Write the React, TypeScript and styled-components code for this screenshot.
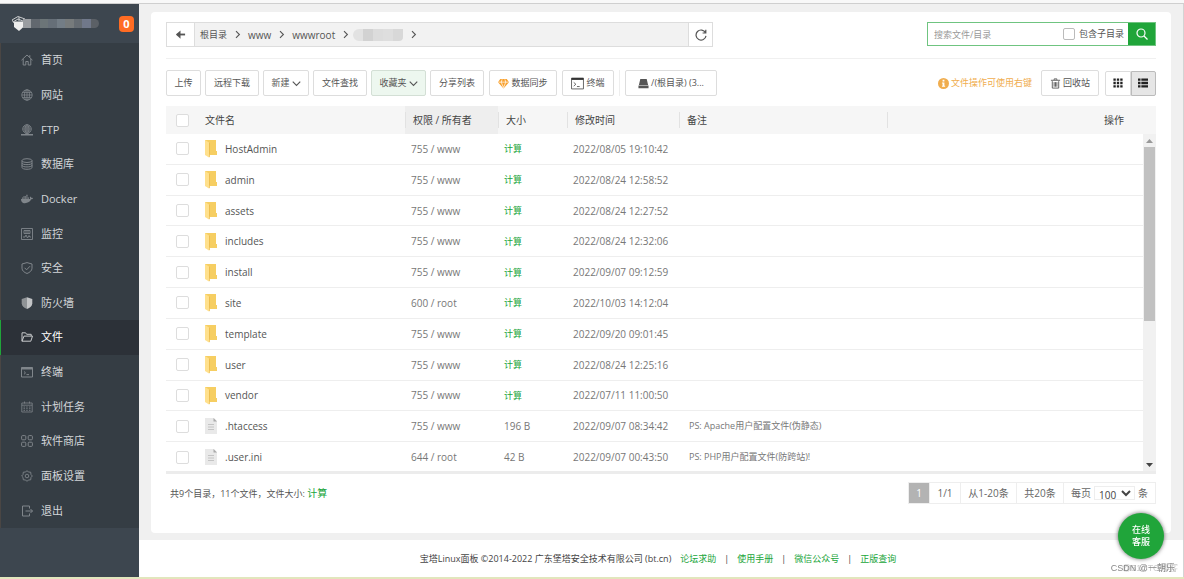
import React from 'react';
import styled, { createGlobalStyle } from 'styled-components';
import { FaDocker } from 'react-icons/fa';

const GREEN = '#20a53a';

const GlobalStyle = createGlobalStyle`
  * { box-sizing: border-box; }
  body {
    margin: 0;
    background: #f0f0f0;
    color: #555;
    font: 10px/16px "Open Sans", "Noto Sans CJK SC", sans-serif;
  }
  button, input, select { font: inherit; color: inherit; margin: 0; }
  button { cursor: pointer; }
  a { color: ${GREEN}; text-decoration: none; }
`;

const Page = styled.div`
  display: flex;
  flex-direction: column;
  min-height: 100vh;
  border-bottom: 2px solid #e2e6bd;
`;
const TopStrip = styled.div`
  height: 4px;
  background: #f8f8f8;
  border-bottom: 1px solid #cfcfcf;
`;
const Shell = styled.div`
  display: flex;
  flex: 1;
  border-right: 1px solid #d4d4d4;
`;

/* Sidebar */
const Sidebar = styled.aside`
  width: 139px;
  flex: none;
  background: #3d464f;
`;
const Brand = styled.header`
  display: flex;
  align-items: center;
  height: 39px;
  padding: 0 5px 0 12px;
`;
const NameMask = styled.div`
  display: flex;
  width: 76px;
  height: 9px;
  margin-left: -3px;
  overflow: hidden;
  border-radius: 0 5px 5px 0;
`;
const MaskCell = styled.span<{ $color: string }>`
  flex: 1;
  background: ${(p) => p.$color};
`;
const Count = styled.span`
  display: flex;
  align-items: center;
  justify-content: center;
  width: 15px;
  height: 16px;
  margin-left: auto;
  border-radius: 4px;
  background: #ff6c23;
  color: #fff;
  font-size: 11px;
  font-weight: 700;
`;
const Menu = styled.nav`
  display: grid;
  grid-template-rows: repeat(14, 1fr);
  height: 485px;
  background: #353d44;
`;
const MenuItem = styled.a<{ $active?: boolean }>`
  display: flex;
  align-items: center;
  gap: 8px;
  padding-left: 20px;
  border-left: 1px solid ${(p) => (p.$active ? GREEN : '#4a4644')};
  background: ${(p) => (p.$active ? '#2c3138' : 'transparent')};
  color: ${(p) => (p.$active ? '#fff' : '#d3d6d9')};
  font-size: 11px;
  svg { color: ${(p) => (p.$active ? '#c8cacc' : '#80868b')}; flex: none; }
`;

/* Main column */
const Main = styled.div`
  display: flex;
  flex: 1;
  flex-direction: column;
  min-width: 0;
`;
const Card = styled.main`
  margin: 8px 12px 7px;
  padding: 10px 15px 29px;
  border-radius: 4px;
  background: #fff;
`;
const TopRow = styled.div`
  display: flex;
  justify-content: space-between;
  padding-bottom: 11px;
  border-bottom: 1px solid #f0f0f0;
`;
const PathBar = styled.div`
  display: flex;
  width: 547px;
  height: 25px;
  border: 1px solid #ddd;
`;
const PathButton = styled.button<{ $side: 'left' | 'right' }>`
  display: flex;
  align-items: center;
  justify-content: center;
  width: ${(p) => (p.$side === 'left' ? 28 : 24)}px;
  padding: 0;
  border: 0;
  border-${(p) => (p.$side === 'left' ? 'right' : 'left')}: 1px solid #ddd;
  background: #fff;
`;
const Crumbs = styled.div`
  display: flex;
  flex: 1;
  align-items: center;
  gap: 6px;
  padding-left: 5px;
  background: #f2f2f2;
  a { color: #555; }
  a:first-child { font-size: 9px; }
`;
const CrumbMask = styled.span`
  display: flex;
  width: 50px;
  height: 12px;
  margin-left: -3px;
  overflow: hidden;
  border-radius: 6px 0 4px 6px;
`;
const Search = styled.form`
  display: flex;
  align-items: center;
  width: 229px;
  height: 24px;
  border: 1px solid #6fc480;
  font-size: 9px;
`;
const SearchInput = styled.input`
  flex: 1;
  min-width: 0;
  height: 20px;
  padding: 0 6px;
  border: 0;
  outline: 0;
  background: transparent;
  &::placeholder { color: #999; opacity: 1; }
`;
const Check = styled.input`
  appearance: none;
  display: block;
  flex: none;
  width: 13px;
  height: 13px;
  border: 1px solid #ddd;
  border-radius: 2px;
  background: #fff;
`;
const SubLabel = styled.label`
  display: flex;
  align-items: center;
  gap: 4px;
  padding-right: 4px;
  ${Check} { width: 12px; height: 12px; border-color: #bbb; }
`;
const SearchButton = styled.button`
  display: flex;
  align-items: center;
  justify-content: center;
  align-self: stretch;
  width: 27px;
  padding: 0;
  border: 0;
  background: ${GREEN};
  color: #fff;
`;

const Toolbar = styled.div`
  display: flex;
  align-items: center;
  gap: 5px;
  padding: 11px 0 10px;
`;
const FileActions = styled.div`
  display: flex;
  gap: 4px;
`;
const ToolButton = styled.button<{ $w: number; $on?: boolean }>`
  display: flex;
  align-items: center;
  justify-content: center;
  gap: 2px;
  width: ${(p) => p.$w}px;
  height: 26px;
  padding: 0;
  border: 1px solid ${(p) => (p.$on ? '#d3dfd5' : '#ddd')};
  border-radius: 2px;
  background: ${(p) => (p.$on ? '#edf7ef' : '#fff')};
  font-size: 9px;
  white-space: nowrap;
`;
const Divider = styled.span`
  width: 1px;
  height: 26px;
  background: #eee;
`;
const Tip = styled.span`
  display: flex;
  align-items: center;
  gap: 2px;
  margin-left: auto;
  margin-right: 4px;
  color: #f0ad4e;
  font-size: 9px;
`;
const ViewSwitch = styled.div`
  display: flex;
  width: 51px;
  height: 25px;
  margin-left: 1px;
`;
const ViewButton = styled.button<{ $on?: boolean }>`
  display: flex;
  flex: 1;
  align-items: center;
  justify-content: center;
  padding: 0;
  border: 1px solid ${(p) => (p.$on ? '#bbb' : '#ddd')};
  border-radius: ${(p) => (p.$on ? '0 2px 2px 0' : '2px 0 0 2px')};
  background: ${(p) => (p.$on ? '#e6e6e6' : '#fff')};
  color: #222;
`;

/* File table */
const TableFrame = styled.div`
  position: relative;
  height: 368px;
  overflow: hidden;
  border-bottom: 3px solid #ececec;
`;
const FileTable = styled.table`
  width: 100%;
  height: 367px;
  table-layout: fixed;
  border-collapse: separate;
  border-spacing: 0;
  th, td { text-align: left; font-weight: 400; white-space: nowrap; }
  th { height: 28px; padding: 0 8px; background: #f6f6f6; color: #444; }
  th:nth-child(3) { background: #eee; }
  th:last-child { padding-right: 32px; text-align: right; }
  td { height: 30px; padding: 0 6px; border-bottom: 1px solid #eee; color: #777; }
  td:nth-child(2) { padding-left: 8px; }
  th:first-child, td:first-child { padding: 0 0 0 10px; }
  td:nth-child(6) { padding-left: 10px; font-size: 9px; }
`;
const HeadMark = styled.span`
  display: block;
  margin-left: -8px;
  padding-left: 7px;
  border-left: 1px solid #e2e2e2;
`;
const FileName = styled.span`
  display: flex;
  align-items: center;
  gap: 8px;
  color: #555;
`;
const SizeLink = styled.a`
  font-size: 9px;
`;
const Scrollbar = styled.div`
  position: absolute;
  top: 28px;
  right: 0;
  bottom: 0;
  display: flex;
  flex-direction: column;
  align-items: center;
  width: 13px;
  padding: 5px 1px 4px;
  background: #f1f1f1;
`;
const Thumb = styled.div`
  width: 11px;
  height: 174px;
  margin: 4px 0 auto;
  background: #c1c1c1;
`;

const BottomRow = styled.div`
  display: flex;
  align-items: center;
  justify-content: space-between;
  padding-top: 8px;
`;
const Summary = styled.div`
  padding-left: 4px;
  font-size: 9px;
  a { font-size: 10px; }
`;
const Pager = styled.div`
  display: flex;
  height: 22px;
  border: 1px solid #eee;
`;
const PageCell = styled.span<{ $w: number; $current?: boolean }>`
  display: flex;
  align-items: center;
  justify-content: center;
  gap: 3px;
  width: ${(p) => p.$w}px;
  border-right: 1px solid #eee;
  background: ${(p) => (p.$current ? '#b3b3b3' : '#fff')};
  color: ${(p) => (p.$current ? '#fff' : '#666')};
  white-space: nowrap;
  &:last-child { border-right: 0; }
`;
const PerPage = styled.label`
  display: flex;
  align-items: center;
  gap: 3px;
`;
const PageSize = styled.select`
  width: 41px;
  height: 14px;
  padding: 0;
  border: 1px solid #eee;
  background: #fff;
  color: #444;
  line-height: 12px;
`;

const Footer = styled.footer`
  display: flex;
  flex: 1;
  align-items: center;
  justify-content: center;
  gap: 9px;
  min-height: 37px;
  padding-right: 6px;
  background: #fff;
  color: #444;
  font-size: 9px;
`;
const FooterLinks = styled.span`
  display: flex;
  gap: 8px;
`;
const Support = styled.button`
  position: fixed;
  right: 20px;
  bottom: 20px;
  width: 46px;
  height: 46px;
  padding: 0 10px;
  border: 0;
  border-radius: 50%;
  background: ${GREEN};
  box-shadow: 0 0 4px rgba(0, 0, 0, 0.6);
  color: #fff;
  font-size: 9px;
  font-weight: 500;
  line-height: 12px;
`;
const Watermark = styled.div<{ $faint?: boolean }>`
  position: fixed;
  right: ${(p) => (p.$faint ? 6 : 9)}px;
  bottom: 3px;
  color: ${(p) => (p.$faint ? '#ccc' : '#888')};
  font: 9px/16px "Liberation Sans", "Noto Sans CJK SC", sans-serif;
`;

/* Icons */
type IconProps = { children: React.ReactNode; size?: number; sw?: number; color?: string };
const Icon = ({ children, size = 12, sw = 1, color = 'currentColor' }: IconProps) => (
  <svg width={size} height={size} viewBox="0 0 12 12" fill="none" stroke={color} strokeWidth={sw} aria-hidden="true">
    {children}
  </svg>
);

const icons: Record<string, React.ReactNode> = {
  home: <Icon><path d="M.5 6.2 6 1l5.500 5.200M2.200 5v6h2.600V7.500h2.400V11h2.600V5M8.800 1.200v2.200" /></Icon>,
  globe: <Icon sw={0.8}><circle cx="6" cy="6" r="5.200" /><ellipse cx="6" cy="6" rx="2.500" ry="5.200" /><path d="M6 .8v10.400M.8 6h10.400M1.500 3.400h9M1.500 8.600h9" /></Icon>,
  ftp: <Icon sw={0.8}><circle cx="6" cy="5" r="4.300" /><ellipse cx="6" cy="5" rx="2" ry="4.300" /><path d="M6 .7v8.600M1.700 5h8.600M2.400 3h7.200M2.400 7h7.200" /><path d="M0 10.800h12M4 10.300h4" strokeWidth="1.400" /></Icon>,
  db: <Icon><ellipse cx="6" cy="2.600" rx="5" ry="1.900" /><path d="M1 2.600v6.800c0 2.500 10 2.500 10 0V2.600M1 5c0 2.200 10 2.200 10 0M1 7.300c0 2.200 10 2.200 10 0" /></Icon>,
  docker: <FaDocker size={12} />,
  monitor: <Icon sw={0.9}><path d="M.5.500h11v11H.5zM3 2.500h6v3H3zM4 4h4M2 9h2l1-2 1.500 3L8 7.500 8.800 9H10" /></Icon>,
  safe: <Icon><path d="M6 .6 11 2v4.200c0 2.500-2.300 4.300-5 5.300-2.700-1-5-2.800-5-5.300V2zM3.600 5.800l2 2L9 4.200" /></Icon>,
  wall: <Icon sw={0}><path d="M6 .3 11.300 2v4.200C11.300 9 9 11 6 12z" fill="#c2c4c6" /><path d="M6 .3.700 2v4.200C.7 9 3 11 6 12z" fill="#8f9396" /></Icon>,
  folder: <Icon><path d="M1 10.200V1.800h3.600l1 1.500h4.600v1.800M1 10.200 3 5.100h8.500l-1.700 5.100z" /></Icon>,
  term: <Icon><path d="M.5 1.500h11v9.500H.5zM3 5.500l1.500 1.400L3 8.300M5.500 8.600H8" /><path d="M.5 2.500h11" strokeWidth="2" /></Icon>,
  cal: <Icon sw={0.8}><path d="M.8 2h10.400v9H.8zM3.500.5v2M8.500.5v2M.8 4.200h10.400M2.500 6h1.500M5.200 6h1.500M8 6h1.500M2.500 7.700h1.500M5.200 7.700h1.500M8 7.700h1.500M2.500 9.400h1.500M5.200 9.400h1.500M8 9.400h1.500" /></Icon>,
  apps: <Icon><rect x=".6" y=".6" width="4.200" height="4.200" rx="1" /><rect x="7.200" y=".6" width="4.200" height="4.200" rx="1" /><rect x=".6" y="7.200" width="4.200" height="4.200" rx="1" /><rect x="7.200" y="7.200" width="4.200" height="4.200" rx="1" /></Icon>,
  gear: <Icon sw={0.9}><path d="M6 .6 7.300 2 9.700 2.200 10 4.600 11.400 6 10 7.400 9.700 9.800 7.300 10 6 11.400 4.700 10 2.300 9.800 2 7.400.6 6 2 4.600 2.300 2.200 4.700 2z" /><circle cx="6" cy="6" r="1.800" /></Icon>,
  exit: <Icon><path d="M8.500 3.500V1H1.500v10h7V8.500M4.500 6h7M9.500 4l2 2-2 2" /></Icon>,
};

const Chevron = ({ dir }: { dir: 'right' | 'down' }) => (
  <Icon size={9} sw={1.500}>
    <path d={dir === 'right' ? 'M4 1.500 8.500 6 4 10.500' : 'M1 3.500l5 5 5-5'} />
  </Icon>
);
const FolderIcon = () => (
  <svg width="12" height="19" viewBox="0 0 12 19" aria-hidden="true">
    <path d="M0 1h11v11h1v4H5L0 12z" fill="#f6ce62" />
    <path d="M0 1l4 2.500V18.500L0 16z" fill="#ffe08c" />
    <path d="M4 3.500V18.500l.8-.8V4z" fill="#ecbc4c" />
  </svg>
);
const FileIcon = () => (
  <svg width="12" height="16" viewBox="0 0 12 16" aria-hidden="true">
    <path d="M0 0h9l3 3v13H0z" fill="#e9e9e9" />
    <path d="M8.500 0 12 3.500H8.500z" fill="#aaa" />
    <path d="M3 6.500h6M3 9h6M3 11.500h6" stroke="#c4c4c4" />
  </svg>
);

const menu: [string, string][] = [
  ['home', '首页'], ['globe', '网站'], ['ftp', 'FTP'], ['db', '数据库'], ['docker', 'Docker'],
  ['monitor', '监控'], ['safe', '安全'], ['wall', '防火墙'], ['folder', '文件'], ['term', '终端'],
  ['cal', '计划任务'], ['apps', '软件商店'], ['gear', '面板设置'], ['exit', '退出'],
];

type FileRow = { name: string; perm: string; size?: string; time: string; note?: string };
const files: FileRow[] = [
  { name: 'HostAdmin', perm: '755 / www', time: '2022/08/05 19:10:42' },
  { name: 'admin', perm: '755 / www', time: '2022/08/24 12:58:52' },
  { name: 'assets', perm: '755 / www', time: '2022/08/24 12:27:52' },
  { name: 'includes', perm: '755 / www', time: '2022/08/24 12:32:06' },
  { name: 'install', perm: '755 / www', time: '2022/09/07 09:12:59' },
  { name: 'site', perm: '600 / root', time: '2022/10/03 14:12:04' },
  { name: 'template', perm: '755 / www', time: '2022/09/20 09:01:45' },
  { name: 'user', perm: '755 / www', time: '2022/08/24 12:25:16' },
  { name: 'vendor', perm: '755 / www', time: '2022/07/11 11:00:50' },
  { name: '.htaccess', perm: '755 / www', size: '196 B', time: '2022/09/07 08:34:42', note: 'PS: Apache用户配置文件(伪静态)' },
  { name: '.user.ini', perm: '644 / root', size: '42 B', time: '2022/09/07 00:43:50', note: 'PS: PHP用户配置文件(防跨站)!' },
];

const brandMask = ['#9a9da1', '#62686f', '#6c7578', '#666f78', '#737d86', '#777b7c', '#666c72', '#70788a', '#5b6066'];
const crumbMask = ['#e2e2e2', '#d2d2d2', '#dcdcdc', '#dedede', '#d8d8d8'];

export default function App() {
  return (
    <Page>
      <GlobalStyle />
      <TopStrip />
      <Shell>
        <Sidebar>
          <Brand>
            <svg width="14" height="15" viewBox="0 0 14 15" aria-hidden="true">
              <path d="M2 5.500h10v5L7 15 2 11z" fill="#eee" />
              <path d="M0 4 6 .5 13 3M1 6l5-3 6 2.500M0 4l2 3M7 1v4" stroke="#c9cbcd" fill="none" />
            </svg>
            <NameMask>{brandMask.map((c, i) => <MaskCell key={i} $color={c} />)}</NameMask>
            <Count>0</Count>
          </Brand>
          <Menu>
            {menu.map(([icon, label]) => (
              <MenuItem key={label} href="#" $active={label === '文件'}>{icons[icon]}{label}</MenuItem>
            ))}
          </Menu>
        </Sidebar>
        <Main>
          <Card>
            <TopRow>
              <PathBar>
                <PathButton $side="left" aria-label="返回">
                  <Icon size={11} sw={2}><path d="M2 6h9" /><path d="M6 1.500v9L1 6z" fill="currentColor" stroke="none" /></Icon>
                </PathButton>
                <Crumbs>
                  <a href="#">根目录</a><Chevron dir="right" />
                  <a href="#">www</a><Chevron dir="right" />
                  <a href="#">wwwroot</a><Chevron dir="right" />
                  <CrumbMask>{crumbMask.map((c, i) => <MaskCell key={i} $color={c} />)}</CrumbMask>
                  <Chevron dir="right" />
                </Crumbs>
                <PathButton $side="right" aria-label="刷新">
                  <Icon sw={1.200}><path d="M10.500 3.700A5 5 0 1 0 11 6.800M10.800.800v3.200H7.600" /></Icon>
                </PathButton>
              </PathBar>
              <Search onSubmit={(e) => e.preventDefault()}>
                <SearchInput placeholder="搜索文件/目录" aria-label="搜索文件/目录" />
                <SubLabel><Check type="checkbox" />包含子目录</SubLabel>
                <SearchButton aria-label="搜索">
                  <Icon sw={1.200}><circle cx="5" cy="5" r="4" /><path d="m8 8 3.500 3.500" /></Icon>
                </SearchButton>
              </Search>
            </TopRow>

            <Toolbar>
              <FileActions>
                <ToolButton $w={35}>上传</ToolButton>
                <ToolButton $w={54}>远程下载</ToolButton>
                <ToolButton $w={46}>新建<Chevron dir="down" /></ToolButton>
                <ToolButton $w={54}>文件查找</ToolButton>
                <ToolButton $w={55} $on>收藏夹<Chevron dir="down" /></ToolButton>
                <ToolButton $w={54}>分享列表</ToolButton>
              </FileActions>
              <ToolButton $w={68}>
                <Icon size={11} sw={0}>
                  <path d="M2.500 1h7L12 4.500 6 11.500 0 4.500z" fill="#f9a02b" />
                  <path d="M.5 4.500h11M3.500 4.500 6 10.500l2.500-6M3.500 4.500 4.500 1.500M8.500 4.500l-1-3" stroke="#fff" strokeWidth=".8" />
                </Icon>
                数据同步
              </ToolButton>
              <ToolButton $w={52}>
                <Icon size={13} sw={0.800}><path d="M.5 1h11v10H.5zM2.500 5l2 1.700-2 1.700M5.500 8.800H8" /><path d="M.5 1.800h11" stroke="#333" strokeWidth="1.800" /></Icon>
                终端
              </ToolButton>
              <Divider />
              <ToolButton $w={92}>
                <Icon size={11} sw={0}><path d="M2.500 1h7l1.500 6.500H1zM.5 8.300h11v3H.5z" fill="#555" /></Icon>
                /(根目录) (3...
              </ToolButton>
              <Tip>
                <Icon size={11} sw={0}><circle cx="6" cy="6" r="6" fill="#f0ad4e" /><path d="M5 2h2v1.800H5zM4.300 5H7v3.500h.8v1H4.300v-1H5V6h-.7z" fill="#fff" /></Icon>
                文件操作可使用右键
              </Tip>
              <ToolButton $w={58}>
                <Icon size={11} sw={1}><path d="M1 2.500h10M4.500 2V1h3v1M2.500 3.500V11h7V3.500M4.500 4.500v5M6 4.500v5M7.500 4.500v5" /></Icon>
                回收站
              </ToolButton>
              <ViewSwitch>
                <ViewButton aria-label="网格视图">
                  <Icon size={10} sw={2.800}><path d="M.5 2h2.800M4.600 2h2.800M8.700 2h2.800M.5 6h2.800M4.600 6h2.800M8.700 6h2.800M.5 10h2.800M4.600 10h2.800M8.700 10h2.800" /></Icon>
                </ViewButton>
                <ViewButton $on aria-label="列表视图">
                  <Icon size={10} sw={2.800}><path d="M0 2h3M4 2h8M0 6h3M4 6h8M0 10h3M4 10h8" /></Icon>
                </ViewButton>
              </ViewSwitch>
            </Toolbar>

            <TableFrame>
              <FileTable>
                <colgroup>
                  <col style={{ width: 31 }} /><col style={{ width: 208 }} /><col style={{ width: 93 }} />
                  <col style={{ width: 69 }} /><col style={{ width: 112 }} /><col style={{ width: 208 }} /><col />
                </colgroup>
                <thead>
                  <tr>
                    <th><Check type="checkbox" aria-label="全选" /></th>
                    <th>文件名</th>
                    <th><HeadMark>权限 / 所有者</HeadMark></th>
                    <th><HeadMark>大小</HeadMark></th>
                    <th><HeadMark>修改时间</HeadMark></th>
                    <th><HeadMark>备注</HeadMark></th>
                    <th><HeadMark>操作</HeadMark></th>
                  </tr>
                </thead>
                <tbody>
                  {files.map((f) => (
                    <tr key={f.name}>
                      <td><Check type="checkbox" aria-label={f.name} /></td>
                      <td><FileName>{f.size ? <FileIcon /> : <FolderIcon />}{f.name}</FileName></td>
                      <td>{f.perm}</td>
                      <td>{f.size ?? <SizeLink href="#">计算</SizeLink>}</td>
                      <td>{f.time}</td>
                      <td>{f.note}</td>
                      <td />
                    </tr>
                  ))}
                </tbody>
              </FileTable>
              <Scrollbar>
                <svg width="7" height="4" viewBox="0 0 7 4" aria-hidden="true"><path d="M0 4 3.500 0 7 4z" fill="#999" /></svg>
                <Thumb />
                <svg width="7" height="4" viewBox="0 0 7 4" aria-hidden="true"><path d="M0 0h7L3.500 4z" fill="#444" /></svg>
              </Scrollbar>
            </TableFrame>

            <BottomRow>
              <Summary>共9个目录，11个文件，文件大小: <a href="#">计算</a></Summary>
              <Pager>
                <PageCell $w={21} $current>1</PageCell>
                <PageCell $w={31}>1/1</PageCell>
                <PageCell $w={56}>从1-20条</PageCell>
                <PageCell $w={47}>共20条</PageCell>
                <PageCell $w={91}>
                  <PerPage>每页<PageSize defaultValue="100"><option>100</option><option>200</option></PageSize></PerPage>条
                </PageCell>
              </Pager>
            </BottomRow>
          </Card>
          <Footer>
            <span>宝塔Linux面板 ©2014-2022 广东堡塔安全技术有限公司 (bt.cn)</span>
            <FooterLinks>
              <a href="#">论坛求助</a><span>|</span>
              <a href="#">使用手册</a><span>|</span>
              <a href="#">微信公众号</a><span>|</span>
              <a href="#">正版查询</a>
            </FooterLinks>
          </Footer>
        </Main>
      </Shell>
      <Support>在线客服</Support>
      <Watermark $faint>@51CTO博客</Watermark>
      <Watermark>CSDN @一朝乐</Watermark>
    </Page>
  );
}
